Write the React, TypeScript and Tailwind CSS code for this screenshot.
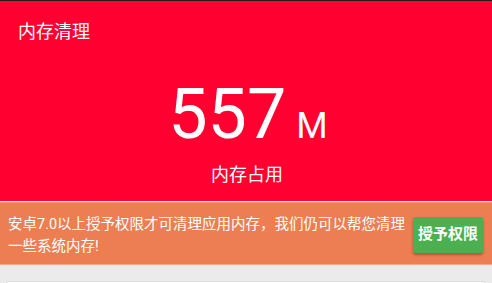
export default function App() {
  const cjk = { fontFamily: 'Roboto, "Noto Sans CJK SC", sans-serif' };
  return (
    <div className="w-[492px] h-[283px] overflow-hidden bg-[#ebebeb] flex flex-col" style={cjk}>
      <div className="h-px shrink-0 bg-[#2a1a1e]" />
      <div className="h-[200px] shrink-0 bg-[#ff0030] flex flex-col text-white">
        <div className="pl-[18px] pt-[19px] text-[18px] leading-[24px]">内存清理</div>
        <div className="flex items-baseline justify-center mt-[35px] pl-[4px]">
          <span className="text-[70px] leading-[70px]" style={{ fontFamily: 'Roboto, sans-serif' }}>557</span>
          <span className="text-[36px] leading-[36px] ml-[10px]" style={{ fontFamily: 'Roboto, sans-serif' }}>M</span>
        </div>
        <div className="text-center text-[18px] leading-[24px] mt-[14px] pl-[2px]">内存占用</div>
      </div>
      <div className="h-px shrink-0 bg-[#fdf0ec]" />
      <div className="h-[63px] shrink-0 bg-[#ec7e52] border-t border-[#f09a78] border-b border-b-[#f2a98a] flex items-center pl-[8px] pr-[9px]">
        <div className="w-[398px] text-white text-[14.5px] leading-[22px] pt-[5px]">
          安卓7.0以上授予权限才可清理应用内存，我们仍可以帮您清理一些系统内存!
        </div>
        <div className="ml-auto w-[70px] h-[36px] bg-[#4caf50] rounded-[2px] shadow-[0_2px_3px_rgba(0,0,0,0.3)] flex items-center justify-center text-white text-[15px] font-semibold mt-[2px]">
          授予权限
        </div>
      </div>
      <div className="flex-1 pt-[16px] px-[6px] pr-[7px]">
        <div className="h-[40px] bg-white border border-[#dcdcdc] rounded-[2px]" />
      </div>
    </div>
  );
}
